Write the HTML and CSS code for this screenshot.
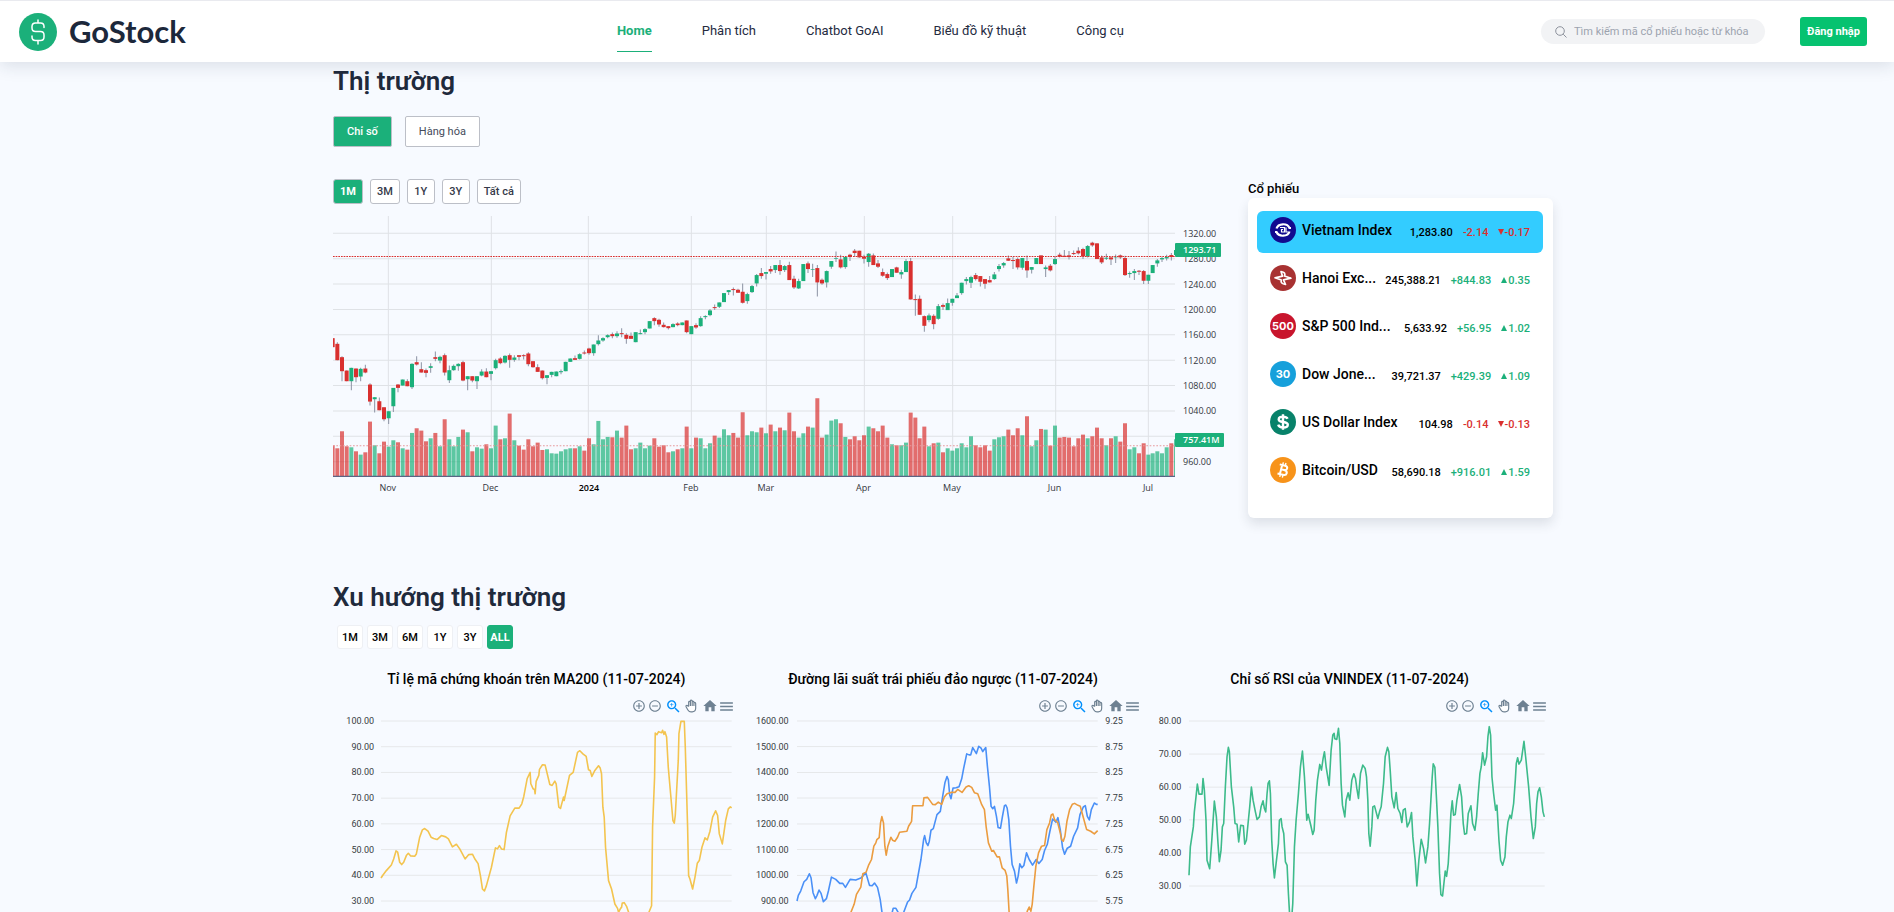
FILE: index.html
```html
<!DOCTYPE html>
<html lang="vi">
<head>
<meta charset="utf-8">
<title>GoStock</title>
<meta name="viewport" content="width=device-width, initial-scale=1">
<link rel="stylesheet" href="styles.css">
</head>
<body>
<svg class="sprite" aria-hidden="true">
  <symbol id="i-plus" viewBox="0 0 24 24"><path d="M13 7h-2v4H7v2h4v4h2v-4h4v-2h-4V7zm-1-5C6.48 2 2 6.48 2 12s4.48 10 10 10 10-4.48 10-10S17.52 2 12 2zm0 18c-4.41 0-8-3.59-8-8s3.59-8 8-8 8 3.59 8 8-3.59 8-8 8z"/></symbol>
  <symbol id="i-minus" viewBox="0 0 24 24"><path d="M7 11v2h10v-2H7zm5-9C6.48 2 2 6.48 2 12s4.48 10 10 10 10-4.48 10-10S17.52 2 12 2zm0 18c-4.41 0-8-3.59-8-8s3.59-8 8-8 8 3.59 8 8-3.59 8-8 8z"/></symbol>
  <symbol id="i-zoom" viewBox="0 0 24 24"><path d="M15.5 14h-.79l-.28-.27C15.41 12.59 16 11.11 16 9.5 16 5.91 13.09 3 9.5 3S3 5.91 3 9.5 5.91 16 9.5 16c1.61 0 3.09-.59 4.23-1.57l.27.28v.79l5 4.99L20.49 19l-4.99-5zm-6 0C7.01 14 5 11.99 5 9.5S7.01 5 9.5 5 14 7.01 14 9.5 11.99 14 9.5 14z"/><path d="M12 10h-2v2H9v-2H7V9h2V7h1v2h2v1z"/></symbol>
  <symbol id="i-pan" viewBox="0 0 24 24"><path class="hand" d="M8 13V5.5a1.5 1.5 0 0 1 3 0V12V3.5a1.5 1.5 0 0 1 3 0V12V5.5a1.5 1.5 0 0 1 3 0V12V7.5a1.5 1.5 0 0 1 3 0V16a6 6 0 0 1-6 6h-2a6 6 0 0 1-5-2.700c-.4-.6-1.500-2.500-3.480-6.030a1.500 1.500 0 0 1 .54-2.020a1.870 1.870 0 0 1 2.280.28L8 13"/></symbol>
  <symbol id="i-home" viewBox="0 0 24 24"><path d="M10 20v-6h4v6h5v-8h3L12 3 2 12h3v8z"/></symbol>
  <symbol id="i-menu" viewBox="0 0 24 24"><path d="M3 18h18v-2H3v2zm0-5h18v-2H3v2zm0-7v2h18V6H3z"/></symbol>
</svg>

<header class="topbar">
  <a class="brand" href="#">
    <svg class="brand-mark" viewBox="0 0 38 38" aria-hidden="true">
      <circle cx="19" cy="19" r="19"/>
      <path d="M25 14.500V13.500Q25 10 21.500 10H16.500Q13 10 13 13.500V15Q13 18.500 16.500 18.500H21.500Q25 18.500 25 22V24Q25 27.500 21.500 27.500H16.500Q13 27.500 13 24V23M19 7V10M19 27.500V31"/>
    </svg>
    <span>GoStock</span>
  </a>
  <nav class="nav">
    <a class="current" href="#">Home</a>
    <a href="#">Phân tích</a>
    <a href="#">Chatbot GoAI</a>
    <a href="#">Biểu đồ kỹ thuật</a>
    <a href="#">Công cụ</a>
  </nav>
  <div class="actions">
    <label class="search">
      <svg viewBox="0 0 12 12" aria-hidden="true"><circle cx="5" cy="5" r="4.300"/><path d="M8.200 8.200L11.500 11.500"/></svg>
      <input type="text" placeholder="Tìm kiếm mã cổ phiếu hoặc từ khóa" aria-label="Tìm kiếm">
    </label>
    <button class="login" type="button">Đăng nhập</button>
  </div>
</header>

<main class="page">
  <h2>Thị trường</h2>
  <div class="tabs">
    <button class="tab active" type="button">Chỉ số</button>
    <button class="tab" type="button">Hàng hóa</button>
  </div>

  <section class="market">
    <div class="market-chart">
      <div class="periods">
        <button class="active" type="button">1M</button>
        <button type="button">3M</button>
        <button type="button">1Y</button>
        <button type="button">3Y</button>
        <button type="button">Tất cả</button>
      </div>
      <div class="price-chart">
        <svg class="candles" id="candles" viewBox="0 48 2526 782" preserveAspectRatio="none" role="img" aria-label="Vietnam Index"></svg>
        <div class="price-axis">
          <span>1320.00</span><span>1280.00</span><span>1240.00</span><span>1200.00</span><span>1160.00</span><span>1120.00</span><span>1080.00</span><span>1040.00</span><span>1000.00</span><span>960.00</span>
          <b class="tag tag-price">1293.71</b>
          <b class="tag tag-volume">757.41M</b>
        </div>
        <svg class="time-axis" aria-hidden="true">
          <text x="6.5%" y="14">Nov</text><text x="18.700%" y="14">Dec</text><text class="year" x="30.400%" y="14">2024</text><text x="42.500%" y="14">Feb</text><text x="51.400%" y="14">Mar</text><text x="63%" y="14">Apr</text><text x="73.500%" y="14">May</text><text x="85.700%" y="14">Jun</text><text x="96.800%" y="14">Jul</text>
        </svg>
      </div>
    </div>

    <aside class="stocks">
      <h3>Cổ phiếu</h3>
      <ul class="stock-list">
        <li class="selected">
          <svg viewBox="0 0 26 26" aria-hidden="true"><circle cx="13" cy="13" r="13" fill="#120a8f"/><g fill="none" stroke="#fff"><path d="M6.500 11.500A6.800 5.600 0 0 1 19.500 11H21M19.500 14.500A6.800 5.600 0 0 1 6.500 15H5" stroke-width="2.200"/><path d="M10 10.500H14.500V15H11.500V12.500H13M16 10.500V15H18" stroke-width="1.200"/></g></svg>
          <span class="name">Vietnam Index</span><span class="value">1,283.80</span><span class="down">-2.14</span><span class="down"><i></i>-0.17</span>
        </li>
        <li>
          <svg viewBox="0 0 26 26" aria-hidden="true"><circle cx="13" cy="13" r="13" fill="#a83232"/><path d="M11 6.500C14.500 7 15.500 8.500 14.500 11L21 13.200L13.500 14.800L15.500 19.500C12 19 10.500 17.500 11.300 15L5 12.800L12.500 11.200Z" fill="none" stroke="#fff" stroke-width="1.700" stroke-linejoin="round"/></svg>
          <span class="name">Hanoi Exc...</span><span class="value">245,388.21</span><span class="up">+844.83</span><span class="up"><i></i>0.35</span>
        </li>
        <li>
          <svg viewBox="0 0 26 26" aria-hidden="true"><circle cx="13" cy="13" r="13" fill="#c8152d"/><text x="13" y="17">500</text></svg>
          <span class="name">S&amp;P 500 Ind...</span><span class="value">5,633.92</span><span class="up">+56.95</span><span class="up"><i></i>1.02</span>
        </li>
        <li>
          <svg viewBox="0 0 26 26" aria-hidden="true"><circle cx="13" cy="13" r="13" fill="#16a0db"/><text x="13" y="17">30</text></svg>
          <span class="name">Dow Jone...</span><span class="value">39,721.37</span><span class="up">+429.39</span><span class="up"><i></i>1.09</span>
        </li>
        <li>
          <svg viewBox="0 0 26 26" aria-hidden="true"><circle cx="13" cy="13" r="13" fill="#08826a"/><path d="M17.600 9.800C16.800 8.200 15.200 7.600 13 7.600C10.300 7.600 8.700 8.700 8.700 10.400C8.700 14.200 17.800 11.800 17.800 15.700C17.800 17.500 15.900 18.600 13.200 18.600C10.500 18.600 8.800 17.600 8.200 15.700M13 5.300V20.800" fill="none" stroke="#fff" stroke-width="2.400"/></svg>
          <span class="name">US Dollar Index</span><span class="value">104.98</span><span class="down">-0.14</span><span class="down"><i></i>-0.13</span>
        </li>
        <li>
          <svg viewBox="0 0 26 26" aria-hidden="true"><circle cx="13" cy="13" r="13" fill="#f7931a"/><g transform="rotate(14 13 13)" fill="none" stroke="#fff"><path d="M8.500 8.300H14C17.500 8.300 17.500 12.700 14 12.700H11M14 12.700C18.500 12.700 18.500 17.700 14 17.700H8.500M11 8.300V17.700" stroke-width="2"/><path d="M11.500 5.500V8M14.200 5.500V8M11.500 18V20.500M14.200 18V20.500" stroke-width="1.400"/></g></svg>
          <span class="name">Bitcoin/USD</span><span class="value">58,690.18</span><span class="up">+916.01</span><span class="up"><i></i>1.59</span>
        </li>
      </ul>
    </aside>
  </section>

  <h2 class="trend-heading">Xu hướng thị trường</h2>
  <div class="ranges">
    <button type="button">1M</button>
    <button type="button">3M</button>
    <button type="button">6M</button>
    <button type="button">1Y</button>
    <button type="button">3Y</button>
    <button class="active" type="button">ALL</button>
  </div>

  <section class="trends">
    <article class="trend">
      <h3>Tỉ lệ mã chứng khoán trên MA200 (11-07-2024)</h3>
      <div class="tools">
        <button type="button" aria-label="Phóng to"><svg><use href="#i-plus"/></svg></button>
        <button type="button" aria-label="Thu nhỏ"><svg><use href="#i-minus"/></svg></button>
        <button class="on" type="button" aria-label="Chọn vùng"><svg><use href="#i-zoom"/></svg></button>
        <button type="button" aria-label="Kéo"><svg><use href="#i-pan"/></svg></button>
        <button class="home" type="button" aria-label="Đặt lại"><svg><use href="#i-home"/></svg></button>
        <button class="menu" type="button" aria-label="Menu"><svg><use href="#i-menu"/></svg></button>
      </div>
      <div class="plot plot-ma">
        <div class="axis"><span>100.00</span><span>90.00</span><span>80.00</span><span>70.00</span><span>60.00</span><span>50.00</span><span>40.00</span><span>30.00</span></div>
        <svg viewBox="184 482 1051 539" preserveAspectRatio="none" aria-hidden="true">
          <path class="grid" d="M184 482H1235M184 559H1235M184 636H1235M184 713H1235M184 790H1235M184 867H1235M184 944H1235M184 1021H1235"/>
          <path class="line yellow" d="M184 952L190 943 200 930 215 913 222 895 229 871 234 875 240 905 246 912 252 905 260 885 266 878 273 886 285 887 290 880 300 830 308 808 315 804 325 812 334 830 342 834 352 837 365 825 378 829 386 835 398 859 410 851 420 865 436 895 447 882 458 881 466 896 475 909 482 945 488 985 494 991 500 975 515 920 527 862 533 865 539 855 545 865 553 867 560 815 571 766 585 743 598 743 606 730 612 708 622 655 631 636 633 670 640 685 644 687 646 700 649 663 657 645 659 627 668 613 676 614 690 672 697 675 705 662 709 670 717 740 722 744 731 710 733 720 749 645 760 636 773 576 780 571 790 581 799 588 806 628 811 630 816 648 825 630 836 616 841 623 845 640 849 740 853 770 857 860 866 960 875 985 885 1030 893 1043 896 1055 902 1043 905 1040 907 1027 913 1026 920 1037 928 1060 960 1085 985 1060 995 1035 998 800 1004 650 1006 518 1011 523 1016 514 1025 517 1028 510 1032 522 1035 514 1040 530 1045 620 1052 700 1059 780 1063 788 1066 765 1075 600 1077 520 1081 495 1083 483 1093 483 1096 560 1103 800 1106 945 1110 955 1118 985 1125 950 1132 908 1138 900 1146 860 1155 832 1162 838 1170 812 1178 770 1187 751 1193 765 1198 820 1207 850 1217 780 1225 745 1231 739 1235 742"/>
        </svg>
      </div>
    </article>

    <article class="trend">
      <h3>Đường lãi suất trái phiếu đảo ngược (11-07-2024)</h3>
      <div class="tools">
        <button type="button" aria-label="Phóng to"><svg><use href="#i-plus"/></svg></button>
        <button type="button" aria-label="Thu nhỏ"><svg><use href="#i-minus"/></svg></button>
        <button class="on" type="button" aria-label="Chọn vùng"><svg><use href="#i-zoom"/></svg></button>
        <button type="button" aria-label="Kéo"><svg><use href="#i-pan"/></svg></button>
        <button class="home" type="button" aria-label="Đặt lại"><svg><use href="#i-home"/></svg></button>
        <button class="menu" type="button" aria-label="Menu"><svg><use href="#i-menu"/></svg></button>
      </div>
      <div class="plot plot-bond">
        <div class="axis"><span>1600.00</span><span>1500.00</span><span>1400.00</span><span>1300.00</span><span>1200.00</span><span>1100.00</span><span>1000.00</span><span>900.00</span></div>
        <svg viewBox="169 183 900 542" preserveAspectRatio="none" aria-hidden="true">
          <path class="grid" d="M169 183H1069M169 260H1069M169 338H1069M169 415H1069M169 493H1069M169 570H1069M169 648H1069M169 725H1069"/>
          <path class="line blue" d="M169 725L173 708 180 695 190 667 198 660 206 643 211 655 217 700 224 718 229 708 235 692 241 702 248 727 257 718 263 695 272 653 285 660 297 672 306 672 314 684 328 660 345 662 360 656 366 650 375 640 386 678 394 679 401 671 410 684 418 720 423 756 430 800 450 775 457 747 465 747 475 765 488 760 500 728 506 722 513 702 525 684 540 600 548 540 551 528 556 550 561 558 565 545 570 512 577 507 588 465 598 455 605 410 612 368 618 350 622 360 626 405 630 417 636 385 645 384 654 381 662 357 668 325 677 282 684 285 689 285 695 263 706 281 713 259 720 265 725 275 734 263 739 320 745 380 750 440 755 447 760 440 766 470 771 504 778 506 784 470 790 438 794 436 798 445 803 480 808 560 813 615 820 635 826 671 831 650 836 613 842 625 848 618 856 580 864 600 874 617 885 600 893 612 903 600 910 573 918 555 926 515 934 478 944 488 950 474 957 510 964 565 970 584 978 566 988 560 997 530 1009 505 1016 465 1026 442 1032 438 1038 470 1044 481 1050 450 1059 430 1065 434 1069 434"/>
          <path class="line orange" d="M330 760L340 735 347 705 360 683 366 643 376 638 383 618 392 600 399 560 405 550 408 540 415 534 419 490 423 471 428 490 432 560 436 587 441 560 450 533 455 542 462 545 470 533 476 518 498 515 503 500 512 485 515 438 546 438 549 414 560 413 575 434 583 435 592 427 602 434 610 412 618 402 630 398 642 398 650 389 663 398 675 382 683 378 692 383 700 399 710 402 722 435 730 450 735 500 742 550 752 575 757 573 768 592 775 592 783 625 792 633 797 650 800 690 804 760 815 850 850 850 858 756 864 743 869 756 873 735 878 680 884 620 892 580 901 560 910 558 917 510 925 490 930 466 935 463 940 480 949 488 957 520 961 540 966 545 971 530 977 485 985 450 993 434 1000 431 1010 437 1017 440 1025 470 1036 510 1048 515 1059 523 1069 513"/>
        </svg>
        <div class="axis axis-right"><span>9.25</span><span>8.75</span><span>8.25</span><span>7.75</span><span>7.25</span><span>6.75</span><span>6.25</span><span>5.75</span></div>
      </div>
    </article>

    <article class="trend">
      <h3>Chỉ số RSI của VNINDEX (11-07-2024)</h3>
      <div class="tools">
        <button type="button" aria-label="Phóng to"><svg><use href="#i-plus"/></svg></button>
        <button type="button" aria-label="Thu nhỏ"><svg><use href="#i-minus"/></svg></button>
        <button class="on" type="button" aria-label="Chọn vùng"><svg><use href="#i-zoom"/></svg></button>
        <button type="button" aria-label="Kéo"><svg><use href="#i-pan"/></svg></button>
        <button class="home" type="button" aria-label="Đặt lại"><svg><use href="#i-home"/></svg></button>
        <button class="menu" type="button" aria-label="Menu"><svg><use href="#i-menu"/></svg></button>
      </div>
      <div class="plot plot-rsi">
        <div class="axis"><span>80.00</span><span>70.00</span><span>60.00</span><span>50.00</span><span>40.00</span><span>30.00</span></div>
        <svg viewBox="149 183 1066 494" preserveAspectRatio="none" aria-hidden="true">
          <path class="grid" d="M149 183H1215M149 282H1215M149 381H1215M149 479H1215M149 578H1215M149 677H1215"/>
          <path class="line green" d="M149 645L153 560 162 500 165 455 170 410 174 372 179 402 188 402 191 355 195 390 200 480 203 600 211 625 217 545 225 423 231 470 236 550 240 604 245 570 249 500 253 490 258 380 263 290 267 262 270 275 276 380 283 440 287 490 293 492 298 545 304 495 312 497 316 552 321 540 326 490 331 440 336 381 341 420 348 455 353 478 360 470 365 440 371 422 375 445 379 455 383 400 386 370 390 362 393 400 397 540 401 610 405 653 410 610 417 550 420 480 425 475 428 500 433 520 438 605 443 615 447 700 451 770 457 770 460 730 465 560 470 480 477 400 483 320 489 273 495 350 502 480 506 462 514 495 520 523 524 510 529 420 534 360 541 313 546 330 551 295 555 275 560 320 569 376 575 270 580 225 584 220 586 236 592 238 597 205 601 250 605 370 609 435 616 470 620 420 626 398 631 420 637 360 643 341 648 355 652 385 657 415 663 340 670 315 677 325 681 350 685 420 688 520 692 558 697 500 700 440 705 437 715 475 720 455 725 440 732 370 737 290 744 262 748 275 752 330 757 410 764 443 770 397 775 445 782 460 787 487 791 450 797 445 803 500 810 485 816 457 820 530 827 600 832 677 838 600 845 537 852 565 858 608 865 560 870 490 874 420 878 350 881 311 886 322 890 400 895 500 900 640 904 703 909 707 917 632 921 648 926 610 930 540 934 460 938 422 942 465 947 463 952 420 960 373 966 410 971 490 975 522 981 520 986 460 994 437 999 490 1006 510 1011 470 1016 400 1021 340 1025 320 1029 278 1035 315 1041 290 1045 230 1049 200 1053 225 1057 350 1062 400 1068 450 1072 435 1078 540 1083 600 1089 615 1096 590 1100 530 1105 485 1111 465 1115 475 1122 430 1127 360 1130 310 1134 293 1138 312 1145 300 1153 244 1158 290 1167 380 1174 470 1181 535 1187 500 1191 430 1195 395 1200 383 1205 410 1210 455 1214 470"/>
        </svg>
      </div>
    </article>
  </section>
</main>
<script src="chart.js"></script>
</body>
</html>
```

FILE: styles.css
```css
* { box-sizing: border-box; }

:root {
  --green: #1bb07a;
  --red: #d9302f;
  --ink: #1f2a3c;
  --line: #bcbfc7;
}

body {
  margin: 0;
  height: 100vh;
  overflow: hidden;
  display: flex;
  flex-direction: column;
  background: #f7faff;
  color: #000;
  font-family: Roboto, "Liberation Sans", sans-serif;
  font-size: 12px;
}

button { font: inherit; margin: 0; cursor: pointer; }
a { color: inherit; text-decoration: none; }
h2, h3, ul { margin: 0; padding: 0; }
.sprite { display: none; }

.topbar {
  flex: none;
  height: 62px;
  display: flex;
  justify-content: space-between;
  align-items: center;
  padding: 0 27px 0 19px;
  background: #fff;
  border-top: 1px solid #e9eaef;
  box-shadow: 0 4px 16px rgba(31, 50, 70, .13);
  z-index: 1;
}

.brand {
  display: flex;
  align-items: center;
  gap: 12px;
  padding-right: 14px;
  color: #1c283b;
  font: 700 31px/36px Lato, sans-serif;
}
.brand span { padding-bottom: 2px; }
.brand-mark { width: 38px; height: 38px; }
.brand-mark circle { fill: var(--green); }
.brand-mark path { fill: none; stroke: #fff; stroke-width: 1.5; stroke-linecap: round; }

.nav { display: flex; gap: 50px; color: #252b3f; font-size: 13px; }
.nav a { padding: 11px 0 12px; line-height: 16px; border-bottom: 1px solid transparent; }
.nav .current { color: var(--green); font-weight: 700; border-color: var(--green); }

.actions { display: flex; justify-content: flex-end; align-items: center; gap: 35px; }
.search {
  display: flex;
  align-items: center;
  gap: 7px;
  width: 224px;
  height: 25px;
  padding: 0 12px 0 14px;
  border-radius: 13px;
  background: #f2f3f5;
}
.search svg { flex: none; width: 12px; height: 12px; fill: none; stroke: #8d929c; }
.search input {
  flex: 1;
  min-width: 0;
  padding: 0;
  border: 0;
  outline: 0;
  background: none;
  font: 11px Roboto, sans-serif;
}
.search input::placeholder { color: #9ca3af; }
.login {
  width: 67px;
  height: 29px;
  padding: 0;
  border: 0;
  border-radius: 3px;
  background: #06c270;
  color: #fff;
  font-size: 11px;
  font-weight: 700;
}

.page {
  flex: 1;
  min-height: 0;
  overflow: hidden;
  padding: 0 341px 0 333px;
}
h2 { color: var(--ink); font-size: 26px; font-weight: 600; line-height: 38px; }

.tabs { display: flex; gap: 13px; margin-top: 16px; }
.tab {
  height: 31px;
  padding: 0 13px;
  border: 1px solid var(--line);
  border-radius: 2px;
  background: #fff;
  color: #454b5a;
  font-size: 11px;
}
.tab.active, .periods .active { background: var(--green); color: #fff; }
.tab.active { font-weight: 500; }

.market { display: flex; gap: 24px; margin-top: 32px; }
.market-chart { flex: 1; min-width: 0; }
.periods { display: flex; gap: 7px; }
.periods button {
  min-width: 28px;
  height: 25px;
  padding: 0 6px;
  border: 1px solid var(--line);
  border-radius: 3px;
  background: #fff;
  color: #353a49;
  font-size: 11px;
  font-weight: 500;
}
.periods .active { font-weight: 700; }

.price-chart { display: grid; grid-template-columns: 1fr 49px; margin-top: 12px; }
.candles { width: 100%; height: 261px; overflow: hidden; }
.candles .grid { fill: none; stroke: #dfe2e6; stroke-width: 3; }
.candles .wick { fill: none; stroke: #8b92a3; stroke-width: 3; }
.candles .up { fill: var(--green); }
.candles .down { fill: var(--red); }
.candles .vol { fill-opacity: .7; }
.candles .last { fill: none; stroke: var(--red); stroke-width: 3; stroke-dasharray: 5 3; }
.candles .average { fill: none; stroke: #e79a9d; stroke-width: 3; stroke-dasharray: 5 5; }
.candles .base { stroke: #5b6585; stroke-width: 4; }

.price-axis {
  position: relative;
  display: flex;
  flex-direction: column;
  justify-content: space-between;
  height: 240px;
  margin-top: 12px;
  padding-left: 8px;
  color: #33363d;
  font: 9px/12px "Open Sans", sans-serif;
}
.tag {
  position: absolute;
  left: 0;
  height: 14px;
  padding: 0 5px 0 8px;
  border-radius: 1px;
  background: var(--green);
  color: #fff;
  font-weight: 600;
  line-height: 14px;
}
.tag-price { top: 15px; }
.tag-volume { top: 205px; padding-right: 4px; }
.time-axis { width: 100%; height: 20px; }
.time-axis text { fill: #33363d; font: 9px "Open Sans", sans-serif; text-anchor: middle; }
.time-axis .year { fill: #000; font-weight: 600; }

.stocks { width: 305px; }
.stocks h3 { font-size: 13px; font-weight: 500; line-height: 19px; }
.stock-list {
  display: flex;
  flex-direction: column;
  gap: 6px;
  height: 320px;
  padding: 13px 10px 0 9px;
  list-style: none;
  background: #fff;
  border-radius: 6px;
  box-shadow: 0 6px 12px rgba(31, 42, 60, .12);
}
.stock-list li {
  display: flex;
  align-items: center;
  height: 42px;
  padding: 0 13px 5px;
  border-radius: 6px;
  font-size: 11px;
  font-weight: 500;
}
.stock-list .selected { background: #33ccff; }
.stock-list svg { flex: none; width: 26px; height: 26px; margin-right: 6px; }
.stock-list text { fill: #fff; font: 700 11px Inter, sans-serif; text-anchor: middle; }
.name { flex: 1; font-size: 14px; white-space: nowrap; }
.value, .up, .down { padding-top: 5px; }
.stock-list .up, .stock-list .down { margin-left: 10px; }
.up { color: var(--green); }
.down { color: var(--red); }
.stock-list i {
  display: inline-block;
  border: 3px solid transparent;
  border-top: 0;
  border-bottom: 6px solid var(--green);
  margin-right: 1px;
  vertical-align: 1px;
}
.stock-list .down i { border-bottom: 0; border-top: 6px solid var(--red); margin-right: 0; }

.trend-heading { margin-top: 60px; }
.ranges { display: flex; gap: 4px; margin: 9px 0 0 4px; }
.ranges button {
  min-width: 26px;
  height: 24px;
  padding: 0 2px;
  border: 1px solid #eef0f4;
  border-radius: 3px;
  background: #fff;
  font-size: 11px;
  font-weight: 500;
}
.ranges .active { border-color: var(--green); background: var(--green); color: #fff; font-weight: 700; }

.trends { display: grid; grid-template-columns: repeat(3, 1fr); margin-top: 20px; }
.trend h3 { font-size: 14px; font-weight: 500; line-height: 20px; text-align: center; }
.tools { display: flex; justify-content: flex-end; align-items: center; height: 16px; margin-top: 9px; padding-right: 5px; }
.tools button { display: flex; padding: 0; margin-left: 2px; border: 0; background: none; }
.tools svg { width: 14px; height: 14px; fill: #6e8192; }
.tools .on { margin-left: 3px; }
.tools .on svg { width: 17px; height: 17px; fill: #008ffb; }
.tools .home { margin-left: 4px; }
.tools .home svg { width: 16px; height: 16px; }
.tools .menu { margin-left: 0; }
.tools .menu svg { width: 17px; height: 17px; }
.hand { fill: #fff; stroke: #6e8192; stroke-width: 2; }

.plot { display: grid; margin-top: 7px; }
.plot svg { width: 100%; height: 180px; overflow: visible; }
.plot-ma { grid-template-columns: 41px 1fr; column-gap: 7px; padding-right: 8px; }
.plot-bond { grid-template-columns: 49px 1fr 40px; column-gap: 8px; padding-right: 1px; }
.plot-rsi { grid-template-columns: 35px 1fr; column-gap: 8px; padding-right: 8px; }
.plot-rsi svg { height: 165px; }
.axis {
  display: flex;
  flex-direction: column;
  justify-content: space-between;
  margin: -6px 0;
  color: #373d3f;
  font-size: 9px;
  line-height: 12px;
  text-align: right;
}
.axis-right { text-align: left; }
.plot .grid { fill: none; stroke: #e6e8ea; stroke-width: 1; vector-effect: non-scaling-stroke; }
.line { fill: none; stroke-width: 1.600; stroke-linejoin: round; vector-effect: non-scaling-stroke; }
.yellow { stroke: #f3c44f; }
.blue { stroke: #4a90f7; }
.orange { stroke: #eb9c40; }
.green { stroke: #3dbb8b; }
```

FILE: chart.js
```js
// One session per entry: direction, body top, body bottom, wick top, wick bottom, volume top.
const sessions = `r 414 441 414 441 735,r 431 480 426 480 744,r 471 513 468 543 693,r 511 543 511 543 738,g 503 543 503 570 741,r 505 531 505 546 753,g 506 529 503 543 763,r 505 517 494 519 756,r 553 604 549 616 664,g 591 597 591 637 735,r 603 630 592 630 759,r 621 657 621 663 724,g 633 654 633 671 739,g 563 618 563 635 720,r 553 563 551 576 726,g 538 556 538 556 744,r 543 558 537 558 748,g 491 561 489 566 698,r 486 493 468 496 684,r 507 517 486 517 691,r 510 518 505 531 723,g 498 503 489 518 714,r 471 476 454 483 698,g 470 481 467 489 738,r 465 517 460 526 657,g 510 540 496 548 717,g 497 510 493 512 738,g 491 498 489 512 710,r 486 541 482 543 688,g 528 537 528 570 696,r 528 541 528 546 753,g 528 543 528 566 741,g 514 526 507 528 745,r 514 531 504 531 732,g 513 521 513 540 744,g 480 504 476 508 676,r 475 489 471 492 717,g 467 487 465 490 714,r 465 479 460 503 640,g 472 479 465 485 720,r 465 470 465 480 736,r 465 468 462 478 748,r 460 492 456 498 717,r 483 501 483 503 738,r 501 515 492 515 727,r 511 534 511 538 749,g 525 533 525 552 747,g 515 524 515 531 759,g 514 528 514 528 760,g 513 516 508 522 753,g 485 513 485 513 747,g 475 485 475 485 744,r 474 479 466 479 744,g 462 476 459 478 738,r 457 460 451 463 751,r 445 459 443 464 714,g 433 459 433 467 732,g 421 432 405 436 662,g 414 421 411 425 717,g 405 411 402 414 710,r 402 408 397 414 711,g 400 408 393 413 691,r 399 402 384 411 712,r 404 416 399 431 676,r 407 416 397 416 747,g 396 426 396 426 744,g 399 402 388 402 727,g 387 396 384 402 744,g 363 385 363 385 736,r 354 363 351 375 714,r 359 373 356 380 739,r 374 381 367 382 735,r 378 384 378 388 756,g 372 381 369 381 753,r 370 375 366 378 747,g 367 375 367 375 744,r 361 396 361 399 679,g 378 402 378 402 744,r 375 382 369 386 712,g 354 378 348 380 714,g 348 351 345 357 744,g 331 345 327 348 729,r 321 324 313 330 706,g 307 320 307 324 712,g 279 306 279 306 687,g 270 276 270 285 705,r 267 270 262 286 698,r 269 278 266 278 712,r 275 308 250 310 636,g 282 303 278 311 705,g 258 276 255 279 693,g 225 250 222 259 696,r 219 228 204 236 682,g 216 221 216 238 699,r 207 214 198 221 673,g 195 210 195 219 693,r 195 213 180 224 682,g 198 210 195 216 690,r 195 240 185 240 637,r 236 262 227 267 693,g 243 265 236 267 712,g 192 243 192 243 699,r 190 207 184 219 679,g 207 209 191 231 682,r 204 247 195 289 594,r 239 250 235 254 712,g 213 247 211 262 703,g 183 200 183 206 661,g 174 176 154 186 657,r 178 202 164 205 669,g 171 201 168 206 710,r 164 171 161 183 717,r 152 159 147 171 708,r 152 172 152 173 720,r 170 176 164 190 705,g 161 186 159 200 679,r 166 195 160 195 684,r 190 200 180 204 693,r 216 227 205 230 676,r 222 234 217 240 712,g 207 231 207 231 732,r 202 218 200 218 735,g 216 223 209 236 735,g 183 216 177 216 727,r 183 298 174 298 637,r 297 300 283 347 652,r 296 344 286 344 714,r 348 377 346 395 679,g 346 360 340 366 738,r 347 372 342 387 729,g 318 356 312 359 727,r 315 320 310 330 756,g 309 330 295 330 744,g 296 308 296 317 751,g 286 294 279 294 744,g 248 279 248 284 729,g 237 243 231 253 741,g 231 248 227 264 708,r 225 237 219 241 735,r 228 245 228 259 741,r 237 251 237 266 735,r 240 247 228 247 751,g 223 237 216 239 717,g 198 207 192 214 711,g 189 196 186 203 708,r 175 182 166 182 688,r 180 183 169 207 705,r 177 202 172 208 684,g 174 203 174 209 705,r 183 211 166 233 648,g 201 209 201 220 738,g 174 192 174 192 720,r 166 192 166 192 686,g 202 207 196 231 688,r 197 211 192 214 736,g 177 192 168 195 676,r 164 170 158 172 712,r 167 171 150 171 710,r 166 171 153 178 712,r 159 162 151 165 738,r 152 160 142 163 714,r 147 169 143 177 703,g 138 169 135 172 714,r 128 136 125 140 708,r 130 177 130 177 682,r 172 187 166 192 714,g 173 176 161 180 735,r 172 178 172 195 714,g 170 172 163 189 708,r 166 172 163 177 724,r 174 225 167 228 669,g 219 222 214 233 747,g 213 219 207 240 741,r 212 215 210 225 759,r 213 242 210 252 729,g 224 242 224 252 763,g 195 219 195 219 759,g 181 190 177 200 753,g 174 178 171 186 759,g 171 175 164 181 741,r 165 171 159 181 729,g 150 165 150 165 717`;

const STEP = 13.98;
const BASE = 828;
const months = [166, 475, 766, 1075, 1300, 1594, 1859, 2168, 2446];

let grid = '';
for (let y = 100; y < BASE; y += 76) grid += `M0 ${y}H2526`;
months.forEach(x => { grid += `M${x} 48V${BASE}`; });

let volumes = '';
let wicks = '';
let bodies = '';
sessions.split(',').forEach((entry, i) => {
  const [dir, top, bottom, high, low, volume] = entry.split(' ');
  const x = Math.round(i * STEP) - 1;
  const kind = dir === 'g' ? 'up' : 'down';
  volumes += `<rect class="vol ${kind}" x="${x - 6}" y="${volume}" width="12" height="${BASE - volume}"/>`;
  wicks += `M${x} ${high}V${low}`;
  bodies += `<rect class="${kind}" x="${x - 6}" y="${top}" width="12" height="${bottom - top}"/>`;
});

document.getElementById('candles').innerHTML =
  `<path class="grid" d="${grid}"/>${volumes}` +
  `<path class="average" d="M0 736H2526"/><path class="wick" d="${wicks}"/>${bodies}` +
  `<path class="last" d="M0 169H2526"/><path class="base" d="M0 ${BASE}H2526"/>`;
```
